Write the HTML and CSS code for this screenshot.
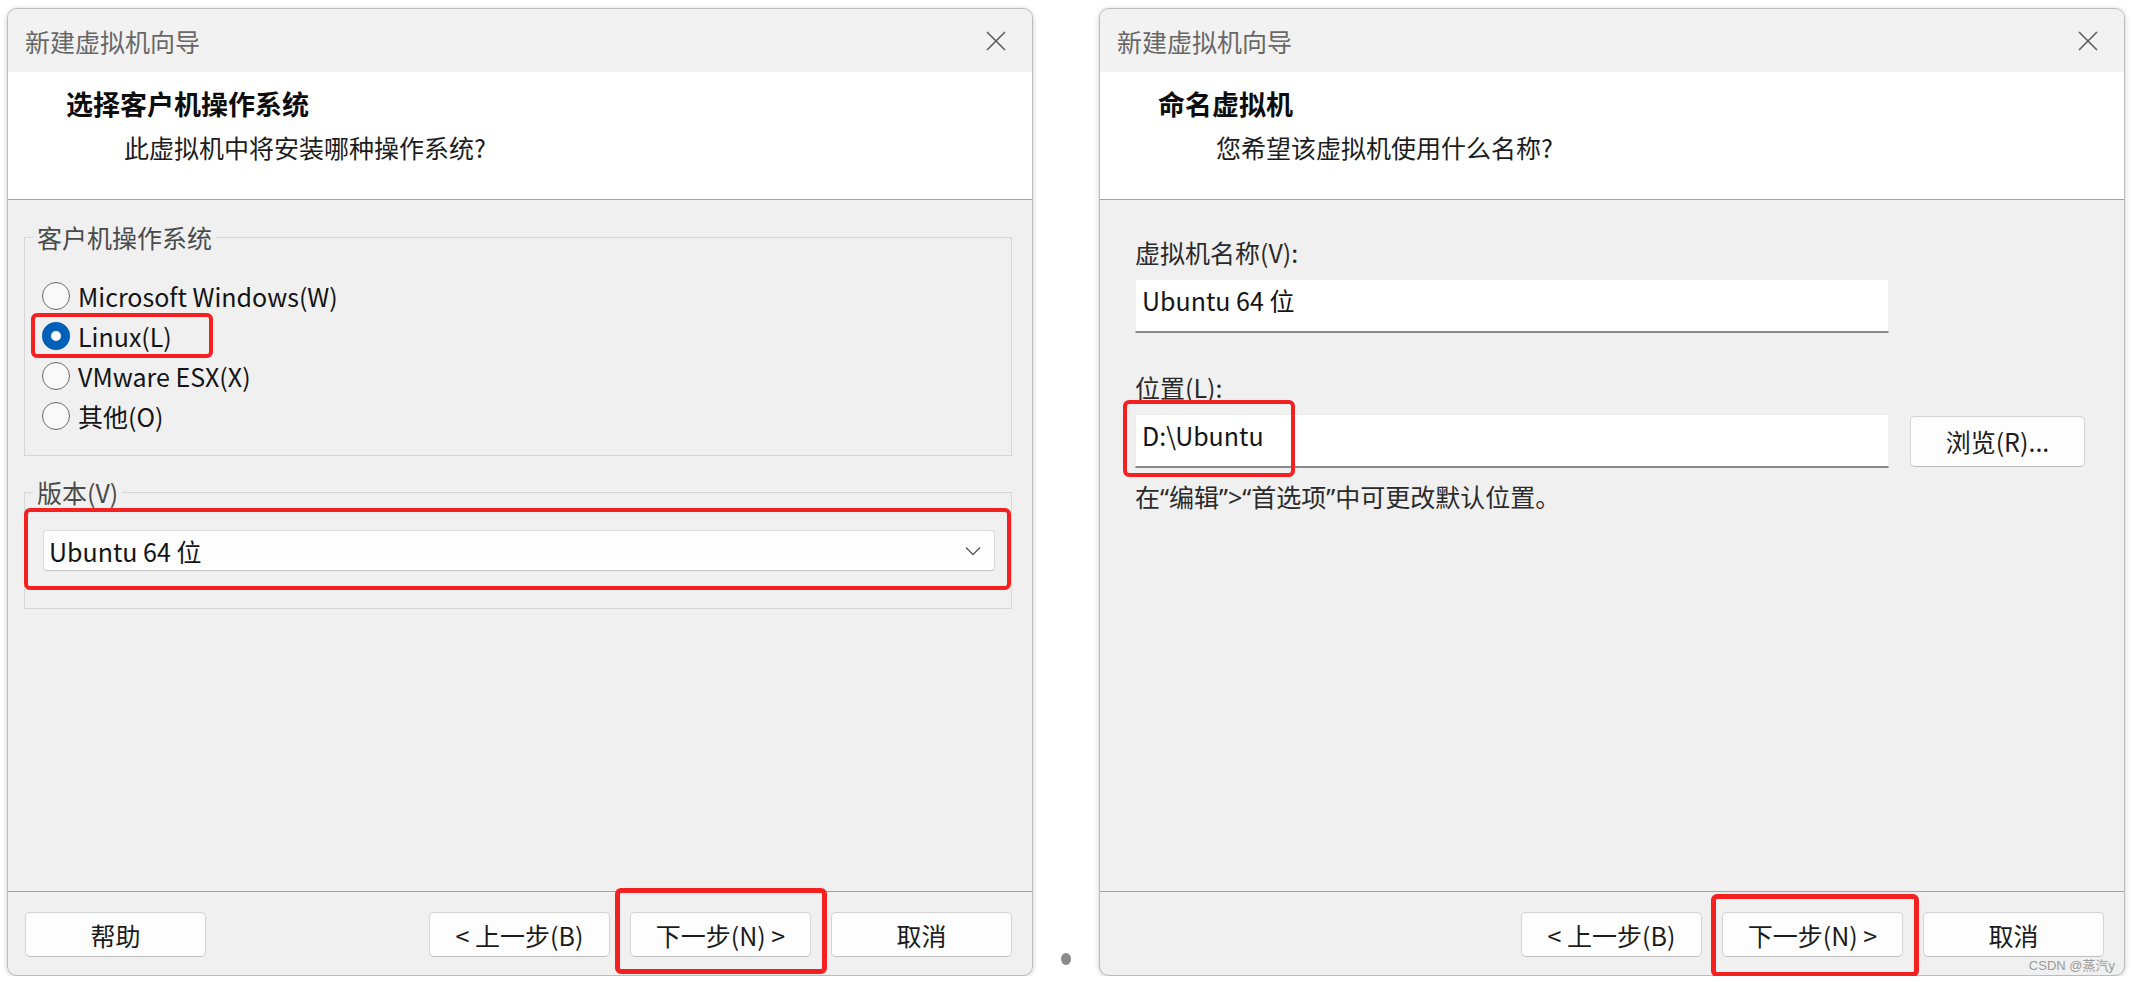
FILE: index.html
```html
<!DOCTYPE html>
<html lang="zh-CN">
<head>
  <meta charset="UTF-8">
  <title>新建虚拟机向导</title>
  <link rel="stylesheet" href="styles.css">
</head>
<body>

<div class="desk">

  <!-- step: guest os -->
  <section class="wizard">
    <div class="titlebar">
      <span class="title">新建虚拟机向导</span>
      <svg class="close" width="22" height="22" viewBox="0 0 22 22"><path d="M2 2 L20 20 M20 2 L2 20" stroke="#5c5c5c" stroke-width="1.6" fill="none"/></svg>
    </div>
    <div class="head">
      <h1>选择客户机操作系统</h1>
      <p>此虚拟机中将安装哪种操作系统?</p>
    </div>
    <div class="body">
      <fieldset class="group os-group">
        <legend>客户机操作系统</legend>
        <div class="radio-row"><span class="radio"></span>Microsoft Windows(W)</div>
        <div class="radio-row marked"><span class="radio checked"></span>Linux(L)<span class="mark mark-linux"></span></div>
        <div class="radio-row"><span class="radio"></span>VMware ESX(X)</div>
        <div class="radio-row"><span class="radio"></span>其他(O)</div>
      </fieldset>
      <fieldset class="group version-group">
        <legend>版本(V)</legend>
        <div class="combo">
          <span>Ubuntu 64 位</span>
          <svg width="16" height="10" viewBox="0 0 16 10"><polyline points="1,1.5 8,8.5 15,1.5" stroke="#555" stroke-width="1.3" fill="none"/></svg>
          <span class="mark mark-version"></span>
        </div>
      </fieldset>
    </div>
    <div class="foot">
      <button class="btn">帮助</button>
      <div class="foot-right">
        <button class="btn">&lt; 上一步(B)</button>
        <button class="btn marked">下一步(N) &gt;<span class="mark mark-next"></span></button>
        <button class="btn">取消</button>
      </div>
    </div>
  </section>

  <div class="gap"><span class="dot"></span></div>

  <!-- step: name -->
  <section class="wizard">
    <div class="titlebar">
      <span class="title">新建虚拟机向导</span>
      <svg class="close" width="22" height="22" viewBox="0 0 22 22"><path d="M2 2 L20 20 M20 2 L2 20" stroke="#5c5c5c" stroke-width="1.6" fill="none"/></svg>
    </div>
    <div class="head">
      <h1>命名虚拟机</h1>
      <p>您希望该虚拟机使用什么名称?</p>
    </div>
    <div class="body name-body">
      <div class="label">虚拟机名称(V):</div>
      <div class="field-row">
        <div class="field">Ubuntu 64 位</div>
      </div>
      <div class="label label-gap">位置(L):</div>
      <div class="field-row">
        <div class="field marked">D:\Ubuntu<span class="mark mark-path"></span></div>
        <button class="btn browse">浏览(R)...</button>
      </div>
      <div class="hint">在“编辑”&gt;“首选项”中可更改默认位置。</div>
    </div>
    <div class="foot">
      <div class="foot-right">
        <button class="btn">&lt; 上一步(B)</button>
        <button class="btn marked">下一步(N) &gt;<span class="mark mark-next2"></span></button>
        <button class="btn">取消</button>
      </div>
    </div>
    <span class="watermark">CSDN @蒸汽y</span>
  </section>

</div>

</body>
</html>
```

FILE: styles.css
```css
body {
  margin: 0;
  background: #fff;
  font-family: "Noto Sans CJK SC", "Noto Sans", sans-serif;
  color: #141414;
}

.desk {
  display: flex;
  align-items: stretch;
  padding: 8px 0 0 7px;
  height: 968px;
}

.wizard {
  position: relative;
  width: 1026px;
  height: 968px;
  box-sizing: border-box;
  display: flex;
  flex-direction: column;
  background: #f0f0f0;
  border: 1px solid #bcbcbc;
  border-radius: 10px;
  box-shadow: 0 1px 5px rgba(0, 0, 0, 0.22);
}

.titlebar {
  height: 63px;
  display: flex;
  align-items: center;
  justify-content: space-between;
  padding: 0 25px 0 17px;
  background: #f2f2f2;
  border-radius: 9px 9px 0 0;
}

.title {
  font-size: 25px;
  color: #676767;
}

.head {
  background: #fff;
  border-bottom: 1px solid #a3a3a3;
  padding: 14px 0 0 58px;
  box-sizing: border-box;
  height: 128px;
}

.head h1 {
  margin: 0;
  font-size: 27px;
  line-height: 36px;
  font-weight: bold;
  color: #0d0d0d;
}

.head p {
  margin: 7px 0 0 58px;
  font-size: 25px;
  line-height: 36px;
  color: #1c1c1c;
}

.body {
  flex: 1;
  padding: 20px 20px 0 16px;
}

/* group boxes */
.group {
  margin: 0;
  border: 1px solid #d6d6d6;
  padding: 22px 16px 19px 8px;
}

.group legend {
  padding: 0 4px;
  font-size: 25px;
  line-height: 34px;
  color: #4a4a4a;
}

.version-group {
  margin-top: 19px;
  padding-top: 21px;
  padding-bottom: 37px;
}

.radio-row {
  position: relative;
  display: flex;
  align-items: center;
  gap: 8px;
  height: 40px;
  padding-left: 9px;
  font-size: 25px;
}

.radio {
  width: 28px;
  height: 28px;
  box-sizing: border-box;
  border: 1.5px solid #6b6b6b;
  border-radius: 50%;
  background: #f9f9f9;
}

.radio.checked {
  border: 9px solid #005fb8;
  background: #fff;
}

.combo {
  position: relative;
  height: 41px;
  box-sizing: border-box;
  margin-left: 10px;
  display: flex;
  align-items: center;
  justify-content: space-between;
  padding: 0 13px 0 5px;
  background: #fdfdfd;
  border: 1px solid #dcdcdc;
  border-bottom-color: #c4c4c4;
  border-radius: 4px;
  font-size: 25px;
}

/* red annotation boxes */
.marked {
  position: relative;
}

.mark {
  position: absolute;
  border: 4px solid #f52020;
  border-radius: 6px;
  pointer-events: none;
}

.mark-linux {
  left: -2px;
  top: -3px;
  width: 182px;
  height: 45px;
  box-sizing: border-box;
}

.mark-version {
  left: -20px;
  top: -23px;
  right: -17px;
  bottom: -20px;
}

.mark-next {
  left: -16px;
  top: -25px;
  width: 212px;
  height: 86px;
  box-sizing: border-box;
  border-width: 5px;
}

.mark-next2 {
  left: -12px;
  top: -19px;
  width: 208px;
  height: 83px;
  box-sizing: border-box;
  border-width: 5px;
}

.mark-path {
  left: -13px;
  top: -15px;
  width: 172px;
  height: 77px;
  box-sizing: border-box;
}

/* footer */
.foot {
  height: 84px;
  box-sizing: border-box;
  border-top: 1px solid #a3a3a3;
  display: flex;
  align-items: flex-start;
  padding: 20px 20px 0 17px;
}

.foot-right {
  margin-left: auto;
  display: flex;
  gap: 20px;
}

.btn {
  width: 181px;
  height: 45px;
  box-sizing: border-box;
  background: #fdfdfd;
  border: 1px solid #d3d3d3;
  border-bottom-color: #bdbdbd;
  border-radius: 5px;
  font-family: inherit;
  font-size: 25px;
  color: #1b1b1b;
  padding: 0;
  display: flex;
  align-items: center;
  justify-content: center;
}

/* name page */
.name-body {
  padding: 35px 0 0 35px;
}

.label {
  font-size: 25px;
  line-height: 34px;
  color: #2a2a2a;
}

.label-gap {
  margin-top: 37px;
}

.field-row {
  display: flex;
  align-items: center;
  gap: 21px;
  margin-top: 10px;
}

.field {
  width: 754px;
  height: 54px;
  box-sizing: border-box;
  background: #fff;
  border: 1px solid #ededed;
  border-bottom: 2px solid #8a8a8a;
  padding: 3px 6px;
  font-size: 25px;
  line-height: 34px;
}

.browse {
  width: 175px;
  height: 51px;
}

.hint {
  margin-top: 12px;
  font-family: "Noto Sans", "Noto Sans CJK SC", sans-serif;
  font-size: 25px;
  line-height: 34px;
  color: #2a2a2a;
}

.gap {
  width: 66px;
  display: flex;
  justify-content: center;
  align-items: flex-end;
  padding-bottom: 11px;
  box-sizing: border-box;
}

.dot {
  width: 10px;
  height: 12px;
  border-radius: 50%;
  background: #8a8a8a;
}

.watermark {
  position: absolute;
  right: 9px;
  bottom: 1px;
  font-size: 13px;
  color: #9a9a9a;
  font-family: "Liberation Sans", "Noto Sans CJK SC", sans-serif;
}
```
